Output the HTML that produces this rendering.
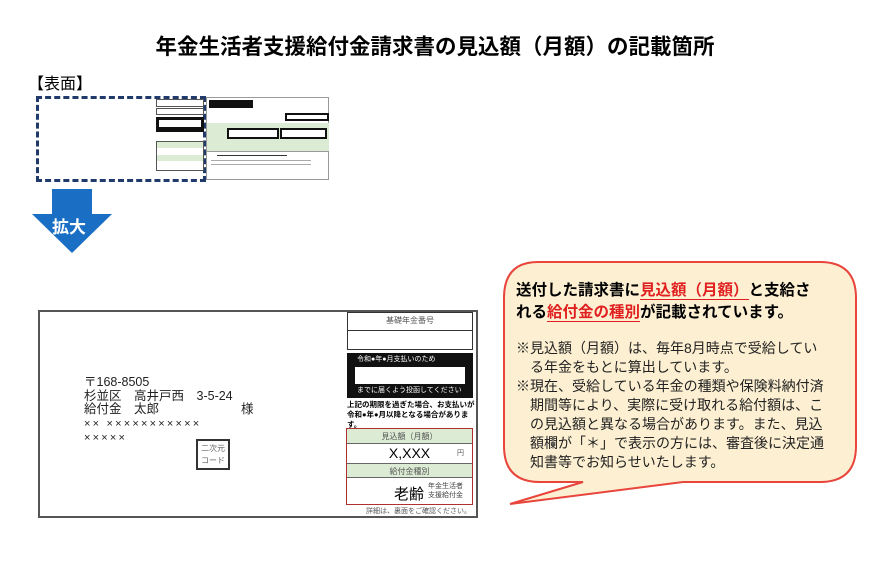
<!DOCTYPE html>
<html><head><meta charset="utf-8"><style>
*{margin:0;padding:0;box-sizing:border-box}
body{width:870px;height:575px;background:#fff;position:relative;font-family:"Liberation Sans","Noto Sans CJK JP",sans-serif;color:#000;overflow:hidden}
.a{position:absolute}
.g{background:#dcebd4}
</style></head><body>
<div class="a" style="left:0;top:30px;width:870px;text-align:center;font-size:21.5px;font-weight:bold">年金生活者支援給付金請求書の見込額（月額）の記載箇所</div>
<div class="a" style="left:28px;top:70px;font-size:16px">【表面】</div>

<!-- thumbnail -->
<div class="a" style="left:36px;top:96px;width:170px;height:86px;border:3px dashed #1f3a6b"></div>
<div class="a" style="left:156px;top:99px;width:48px;height:80px;font-size:4px">
 <div style="border:1px solid #555;height:8px"></div>
 <div style="border:1px solid #555;height:7px;margin-top:1px"></div>
 <div style="background:#111;height:15px;margin-top:2px;padding:3px 3px"><div style="background:#fff;height:7px"></div></div>
 <div style="height:9px"></div>
 <div style="border:1px solid #555;height:30px"><div class="g" style="height:6px"></div><div style="height:7px"></div><div class="g" style="height:6px"></div></div>
</div>
<div class="a" style="left:206px;top:97px;width:123px;height:83px;border:1px solid #999">
 <div class="a" style="left:2px;top:2px;width:44px;height:8px;background:#111"></div>
 <div class="a" style="left:78px;top:15px;width:44px;height:8px;border:2px solid #111"></div>
 <div class="a g" style="left:0;top:25px;width:122px;height:28px"></div>
 <div class="a" style="left:20px;top:30px;width:52px;height:11px;background:#fff;border:2px solid #111"></div>
 <div class="a" style="left:73px;top:30px;width:47px;height:11px;background:#fff;border:2px solid #111"></div>
 <div class="a" style="left:0;top:53px;width:122px;height:1px;background:#999"></div>
 <div class="a" style="left:10px;top:57px;width:70px;height:1px;background:#333"></div>
 <div class="a" style="left:4px;top:62px;width:100px;height:1px;background:#aaa"></div>
 <div class="a" style="left:4px;top:66px;width:100px;height:1px;background:#aaa"></div>
</div>

<!-- arrow -->
<svg class="a" style="left:31px;top:189px" width="82" height="65"><path d="M21 0H61V25H81L41 64L1 25H21Z" fill="#1a6fc4"/></svg>
<div class="a" style="left:52px;top:213px;font-size:17px;font-weight:bold;color:#fff">拡大</div>

<!-- card -->
<div class="a" style="left:38px;top:310px;width:440px;height:208px;border:2px solid #555"></div>
<div class="a" style="left:84px;top:376px;font-size:12.5px;line-height:13.5px;color:#222">〒168-8505<br>杉並区　高井戸西　3-5-24<br>給付金　太郎<span style="margin-left:82px">様</span><br><span style="font-size:11px;letter-spacing:2.2px">×× ×××××××××××<br>×××××</span></div>
<div class="a" style="left:196px;top:439px;width:34px;height:31px;border:2px solid #333;font-size:8px;color:#666;text-align:center;line-height:12px;padding-top:2px">二次元<br>コード</div>

<div class="a" style="left:347px;top:312px;width:126px;height:19px;border:1.5px solid #333;font-size:8px;color:#555;text-align:center;line-height:16px">基礎年金番号</div>
<div class="a" style="left:347px;top:330px;width:126px;height:20px;border:1.5px solid #333"></div>
<div class="a" style="left:347px;top:353px;width:126px;height:45px;background:#111;color:#fff;font-size:7px;line-height:9px">
 <div style="padding:2px 0 0 10px">令和●年●月支払いのため</div>
 <div style="margin:3px 0 0 8px;width:110px;height:17px;background:#fff"></div>
 <div style="padding:2px 0 0 10px;white-space:nowrap">までに届くよう投函してください</div>
</div>
<div class="a" style="left:347px;top:400px;width:130px;font-size:7.5px;font-weight:bold;line-height:10px">上記の期限を過ぎた場合、お支払いが令和●年●月以降となる場合がありま す。</div>
<div class="a" style="left:346px;top:428px;width:127px;height:77px;border:1.5px solid #b03030">
 <div class="g" style="height:15px;font-size:8px;color:#555;text-align:center;line-height:15px;border-bottom:1px solid #666">見込額（月額）</div>
 <div style="height:19px;font-size:14px;text-align:center;line-height:19px;position:relative">X,XXX<span style="position:absolute;right:8px;font-size:7px;color:#555">円</span></div>
 <div class="g" style="height:15px;font-size:8px;color:#555;text-align:center;line-height:15px;border-top:1px solid #666;border-bottom:1px solid #666">給付金種別</div>
 <div style="height:26px;position:relative"><span class="a" style="left:47px;top:5px;font-size:15px">老齢</span><span class="a" style="left:81px;top:4px;font-size:7px;line-height:9px;color:#444">年金生活者<br>支援給付金</span></div>
</div>
<div class="a" style="left:366px;top:506px;font-size:7px;color:#555">詳細は、裏面をご確認ください。</div>

<!-- bubble -->
<svg class="a" style="left:498px;top:258px" width="365" height="252"><path d="M40 4H322Q358 4 358 40V188Q358 224 322 224H185L12 246L85 224H42Q6 224 6 188V40Q6 4 40 4Z" fill="#fdf0d2" stroke="#e8453c" stroke-width="2"/></svg>
<div class="a" style="left:516px;top:280px;font-size:15.5px;font-weight:bold;line-height:22px;width:340px;white-space:nowrap">送付した請求書に<span style="color:#e02020;border-bottom:1px solid #e02020">見込額（月額）</span>と支給さ<br>れる<span style="color:#e02020;border-bottom:1px solid #e02020">給付金の種別</span>が記載されています。</div>
<div class="a" style="left:516px;top:339px;font-size:14px;line-height:19px;width:340px;color:#222;white-space:nowrap">※見込額（月額）は、毎年8月時点で受給してい<br>　る年金をもとに算出しています。<br>※現在、受給している年金の種類や保険料納付済<br>　期間等により、実際に受け取れる給付額は、こ<br>　の見込額と異なる場合があります。また、見込<br>　額欄が「＊」で表示の方には、審査後に決定通<br>　知書等でお知らせいたします。</div>
</body></html>
